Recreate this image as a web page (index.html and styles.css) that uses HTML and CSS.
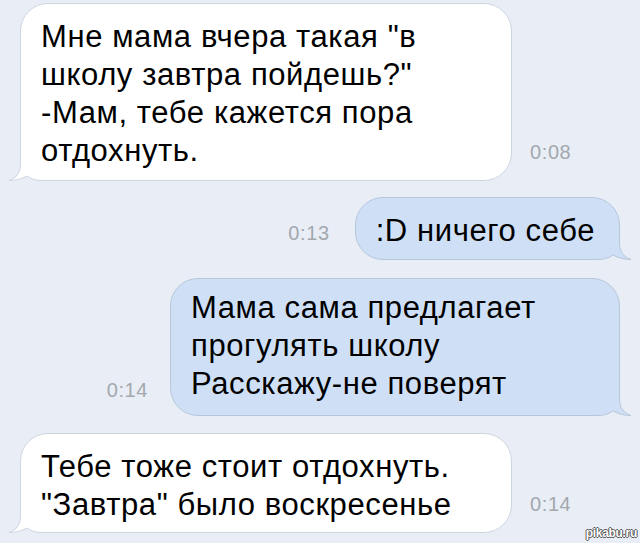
FILE: index.html
```html
<html>
<head>
    <meta name="viewport" content="width=device-width, initial-scale=1.0">
    <title>Чат</title>
    <link rel="stylesheet" href="styles.css">
</head>
<body>
<div class="chat">
    <div class="row in first">
        <div class="bubble wide">
            <svg class="tail" width="46" height="32" viewBox="0 0 46 32">
                <path class="tail-fill" d="M12.5 0 L12.5 15 C12.5 24 8 29 1 31.5 C7 31.5 14 30 19 27 C23 30 28 31.5 34 31.5 L46 31.5 L46 0 Z"/>
                <path class="tail-line" d="M12.5 0 L12.5 15 C12.5 24 8 29 1 31.5 C7 31.5 14 30 19 27 C23 30 28 31.5 34 31.5 L46 31.5"/>
            </svg>
            <p class="text">Мне мама вчера такая "в<br>школу завтра пойдешь?"<br>-Мам, тебе кажется пора<br>отдохнуть.</p>
        </div>
        <span class="time t08">0:08</span>
    </div>

    <div class="row out second">
        <span class="time t13">0:13</span>
        <div class="bubble short">
            <svg class="tail" width="46" height="32" viewBox="0 0 46 32">
                <path class="tail-fill" d="M12.5 0 L12.5 15 C12.5 24 8 29 1 31.5 C7 31.5 14 30 19 27 C23 30 28 31.5 34 31.5 L46 31.5 L46 0 Z"/>
                <path class="tail-line" d="M12.5 0 L12.5 15 C12.5 24 8 29 1 31.5 C7 31.5 14 30 19 27 C23 30 28 31.5 34 31.5 L46 31.5"/>
            </svg>
            <p class="text">:D ничего себе</p>
        </div>
    </div>

    <div class="row out third">
        <span class="time t14a">0:14</span>
        <div class="bubble mid">
            <svg class="tail" width="46" height="32" viewBox="0 0 46 32">
                <path class="tail-fill" d="M12.5 0 L12.5 15 C12.5 24 8 29 1 31.5 C7 31.5 14 30 19 27 C23 30 28 31.5 34 31.5 L46 31.5 L46 0 Z"/>
                <path class="tail-line" d="M12.5 0 L12.5 15 C12.5 24 8 29 1 31.5 C7 31.5 14 30 19 27 C23 30 28 31.5 34 31.5 L46 31.5"/>
            </svg>
            <p class="text">Мама сама предлагает<br>прогулять школу<br>Расскажу-не поверят</p>
        </div>
    </div>

    <div class="row in fourth">
        <div class="bubble wide">
            <svg class="tail" width="46" height="32" viewBox="0 0 46 32">
                <path class="tail-fill" d="M12.5 0 L12.5 15 C12.5 24 8 29 1 31.5 C7 31.5 14 30 19 27 C23 30 28 31.5 34 31.5 L46 31.5 L46 0 Z"/>
                <path class="tail-line" d="M12.5 0 L12.5 15 C12.5 24 8 29 1 31.5 C7 31.5 14 30 19 27 C23 30 28 31.5 34 31.5 L46 31.5"/>
            </svg>
            <p class="text">Тебе тоже стоит отдохнуть.<br>"Завтра" было воскресенье</p>
        </div>
        <span class="time t14b">0:14</span>
    </div>
</div>
<div class="mark">pikabu.ru</div>
</body>
</html>
```

FILE: styles.css
```css
/* Page */
body {
    margin: 0;
    width: 640px;
    height: 543px;
    overflow: hidden;
    position: relative;
    background: #e9eef6;
    font-family: 'Liberation Sans', Arial, sans-serif;
}
/* Message list */
.chat {
    display: flex;
    flex-direction: column;
    padding: 3px 20px 0 20px;
}
.row {
    display: flex;
    align-items: flex-end;
}
.row.out {
    justify-content: flex-end;
}
.second {
    margin-top: 16px;
}
.third {
    margin-top: 18px;
}
.fourth {
    margin-top: 17px;
}
/* Bubbles */
.bubble {
    position: relative;
    box-sizing: border-box;
    border-radius: 28px;
    border: 1px solid #cdd5de;
    background: #fff;
    padding: 0 20px;
}
.bubble.wide {
    width: 492px;
}
.bubble.mid {
    width: 450px;
}
.bubble.short {
    padding-right: 24px;
}
.out .bubble {
    background: #cfe0f6;
    border-color: #b6c7db;
}
.first .bubble {
    padding-top: 14px;
    padding-bottom: 10px;
}
.second .bubble {
    padding-top: 14px;
    padding-bottom: 9px;
}
.third .bubble {
    padding-top: 10px;
    padding-bottom: 12px;
}
.fourth .bubble {
    padding-top: 14px;
    padding-bottom: 8px;
}
.text {
    position: relative;
    margin: 0;
    font-size: 31px;
    letter-spacing: 0.6px;
    line-height: 38px;
    color: #000;
    white-space: nowrap;
}
/* Bubble tails */
.tail {
    position: absolute;
    bottom: -1px;
    left: -13px;
    display: block;
}
.out .tail {
    left: auto;
    right: -13px;
    transform: scaleX(-1);
}
.tail-fill {
    fill: #fff;
}
.out .tail-fill {
    fill: #cfe0f6;
}
.tail-line {
    fill: none;
    stroke: #cdd5de;
    stroke-width: 1;
}
.out .tail-line {
    stroke: #b6c7db;
}
/* Timestamps */
.time {
    font-size: 20px;
    letter-spacing: 0.6px;
    line-height: 22px;
    color: #a3a8ae;
}
.t08 {
    margin: 0 0 18px 18px;
}
.t13 {
    margin: 0 25px 16px 0;
}
.t14a {
    margin: 0 22px 15px 0;
}
.t14b {
    margin: 0 0 18px 18px;
}
/* Watermark */
.mark {
    position: absolute;
    right: 3px;
    bottom: 3px;
    font-size: 12px;
    font-weight: bold;
    letter-spacing: -0.3px;
    color: #fff;
    text-shadow: -1px 0 #555, 1px 0 #555, 0 -1px #555, 0 1px #555;
}
```
